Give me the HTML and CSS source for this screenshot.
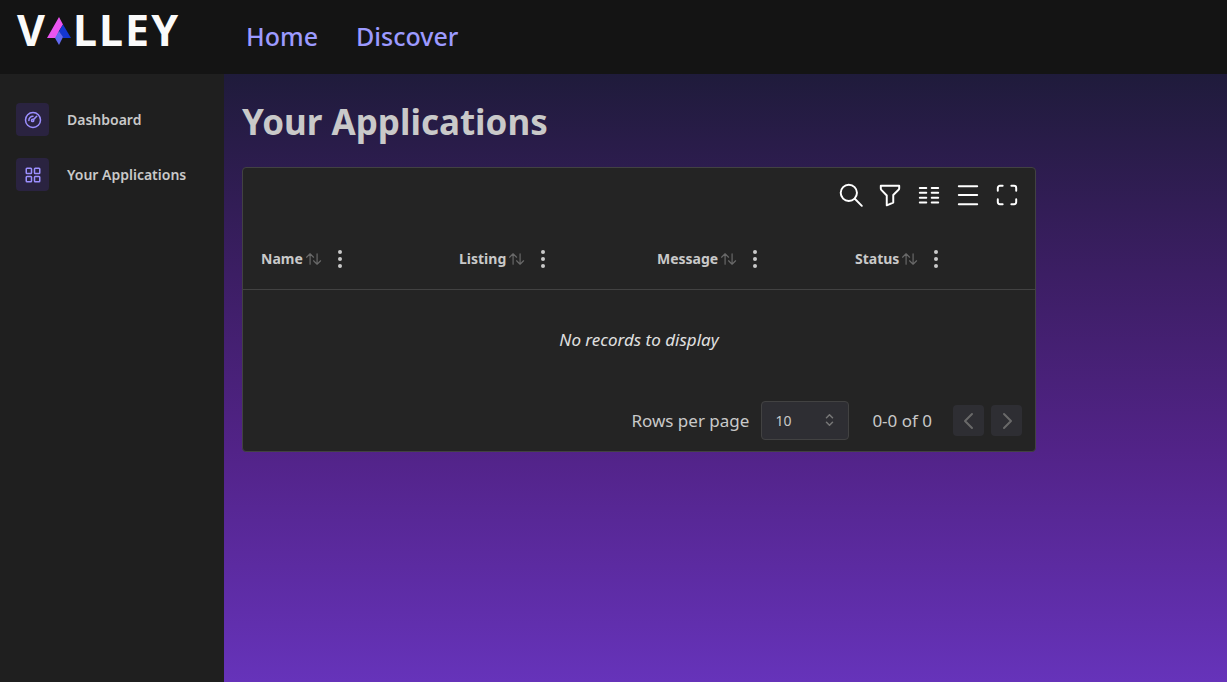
FILE: index.html
```html
<!DOCTYPE html>
<html lang="en">
<head>
<meta charset="utf-8">
<meta name="viewport" content="width=device-width, initial-scale=1">
<title>Valley</title>
<link rel="stylesheet" href="styles.css">
</head>
<body>
<header class="topbar">
  <a class="logo" href="#" aria-label="Valley">
    <span>V</span>
    <svg class="logo-mark" viewBox="0 0 24 28" aria-hidden="true">
      <path fill="#eb55f0" d="M12 0 16 7.500 12 14 9 21H0Z"/>
      <path fill="#1436d2" d="M16 7.500 24 21H16L12 14Z"/>
      <path fill="#626af2" d="M12 14 16 20 12 28 8 21Z"/>
    </svg>
    <span>L</span><span>L</span><span>E</span><span>Y</span>
  </a>
  <nav class="topnav">
    <a href="#">Home</a>
    <a href="#">Discover</a>
  </nav>
</header>
<div class="body">
  <nav class="sidebar">
    <a class="side-link" href="#">
      <span class="side-icon"><svg viewBox="0 0 24 24" class="stroke"><circle cx="12" cy="12" r="10"/><circle cx="11.500" cy="12.500" r="1.500"/><path d="M12.800 11.200 17 7M6.500 12.500A5.500 5.500 0 0 1 12 7"/></svg></span>
      Dashboard
    </a>
    <a class="side-link" href="#">
      <span class="side-icon"><svg viewBox="0 0 24 24" class="stroke"><rect x="3" y="3" width="7" height="7" rx="1"/><rect x="14" y="3" width="7" height="7" rx="1"/><rect x="3" y="14" width="7" height="7" rx="1"/><rect x="14" y="14" width="7" height="7" rx="1"/></svg></span>
      Your Applications
    </a>
  </nav>
  <main class="main">
    <h1>Your Applications</h1>
    <section class="card">
      <div class="toolbar">
        <button type="button" aria-label="Search"><svg viewBox="0 0 24 24" class="stroke"><circle cx="10" cy="10" r="7.500"/><path d="m22 22-6.500-6.500"/></svg></button>
        <button type="button" aria-label="Filter"><svg viewBox="0 0 24 24" class="stroke"><path d="M3.500 3.500h17v2.300a2 2 0 0 1-.6 1.400L15 12v7l-6 2.500v-9L4 7.200a2 2 0 0 1-.5-1.400Z"/></svg></button>
        <button type="button" aria-label="Columns"><svg viewBox="0 0 24 24" class="stroke"><path d="M3.500 5.500h6M3.500 10h6M3.500 14.500h6M3.500 19h6M14.500 5.500h6M14.500 10h6M14.500 14.500h6M14.500 19h6"/></svg></button>
        <button type="button" aria-label="Density"><svg viewBox="0 0 24 24" class="stroke"><path d="M3.500 4h17M3.500 12h17M3.500 20.500h17"/></svg></button>
        <button type="button" aria-label="Full screen"><svg viewBox="0 0 24 24" class="stroke"><path d="M3.500 8V5.500a2 2 0 0 1 2-2H8M3.500 16v2.500a2 2 0 0 0 2 2H8M16 3.500h2.500a2 2 0 0 1 2 2V8M16 20.500h2.500a2 2 0 0 0 2-2V16"/></svg></button>
      </div>
      <table class="grid">
        <thead>
          <tr>
            <th scope="col"><div class="head">Name<svg class="sort stroke" viewBox="0 0 24 24"><path d="M7 21V3M1 9l6-6 6 6M19 3v18M13 15l6 6 6-6"/></svg><button type="button" class="dots" aria-label="Name actions"><svg viewBox="0 0 4 18"><circle cx="2" cy="2" r="2"/><circle cx="2" cy="9" r="2"/><circle cx="2" cy="16" r="2"/></svg></button></div></th>
            <th scope="col"><div class="head">Listing<svg class="sort stroke" viewBox="0 0 24 24"><path d="M7 21V3M1 9l6-6 6 6M19 3v18M13 15l6 6 6-6"/></svg><button type="button" class="dots" aria-label="Listing actions"><svg viewBox="0 0 4 18"><circle cx="2" cy="2" r="2"/><circle cx="2" cy="9" r="2"/><circle cx="2" cy="16" r="2"/></svg></button></div></th>
            <th scope="col"><div class="head">Message<svg class="sort stroke" viewBox="0 0 24 24"><path d="M7 21V3M1 9l6-6 6 6M19 3v18M13 15l6 6 6-6"/></svg><button type="button" class="dots" aria-label="Message actions"><svg viewBox="0 0 4 18"><circle cx="2" cy="2" r="2"/><circle cx="2" cy="9" r="2"/><circle cx="2" cy="16" r="2"/></svg></button></div></th>
            <th scope="col"><div class="head">Status<svg class="sort stroke" viewBox="0 0 24 24"><path d="M7 21V3M1 9l6-6 6 6M19 3v18M13 15l6 6 6-6"/></svg><button type="button" class="dots" aria-label="Status actions"><svg viewBox="0 0 4 18"><circle cx="2" cy="2" r="2"/><circle cx="2" cy="9" r="2"/><circle cx="2" cy="16" r="2"/></svg></button></div></th>
          </tr>
        </thead>
        <tbody>
          <tr><td colspan="4" class="empty">No records to display</td></tr>
        </tbody>
      </table>
      <div class="pager">
        <label for="rows">Rows per page</label>
        <span class="select-wrap">
          <select id="rows"><option>5</option><option selected>10</option><option>20</option></select>
          <svg class="chev stroke" viewBox="0 0 12 16"><path d="M2 5l4-4 4 4M2 11l4 4 4-4"/></svg>
        </span>
        <span class="range">0-0 of 0</span>
        <div class="page-buttons">
          <button type="button" aria-label="Previous page" disabled><svg viewBox="0 0 24 24" class="stroke"><path d="m15 5-7 7 7 7"/></svg></button>
          <button type="button" aria-label="Next page" disabled><svg viewBox="0 0 24 24" class="stroke"><path d="m9 5 7 7-7 7"/></svg></button>
        </div>
      </div>
    </section>
  </main>
</div>
</body>
</html>
```
FILE: styles.css
```css
* { box-sizing: border-box; }
body {
  margin: 0;
  min-height: 100vh;
  display: flex;
  flex-direction: column;
  font-family: "Noto Sans", "Open Sans", sans-serif;
  color: #c9c9c9;
  background: #1f1f1f;
}
a { color: inherit; text-decoration: none; }
button { border: 0; padding: 0; background: none; color: inherit; font: inherit; }
svg { display: block; }
.stroke { fill: none; stroke: currentColor; stroke-width: 2; stroke-linecap: round; stroke-linejoin: round; }

.topbar { display: flex; align-items: center; height: 74px; padding: 0 17px; background: #141414; }
.logo { display: flex; align-items: center; gap: 2px; width: 229px; padding-bottom: 14px; font-size: 43px; line-height: 60px; font-weight: 700; color: #fafafa; }
.logo-mark { width: 24px; height: 28px; margin-top: 2px; }
.topnav { display: flex; gap: 38px; padding-bottom: 2px; font-size: 25px; font-weight: 500; color: #9c9aff; }

.body { flex: 1; display: flex; }
.sidebar { flex: none; width: 224px; padding: 29px 16px; display: flex; flex-direction: column; gap: 22px; background: #1f1f1f; }
.side-link { display: flex; align-items: center; gap: 18px; font-size: 14px; font-weight: 600; }
.side-icon { display: grid; place-items: center; width: 33px; height: 33px; border-radius: 4px; background: #2a2340; color: #9c8fff; }
.side-icon svg { width: 18px; height: 18px; }

.main { flex: 1; padding: 21px 18px; background: linear-gradient(180deg, #1f1b3b 0%, #3c1e64 33%, #522388 62%, #6633ba 100%); }
h1 { margin: 0 0 19px; font-size: 35px; line-height: 53px; font-weight: 700; }

.card { width: fit-content; border: 1px solid #424242; border-radius: 4px; background: #242424; }
.toolbar { display: flex; justify-content: flex-end; gap: 13px; padding: 14px 15px; color: #fff; }
.toolbar svg { width: 26px; height: 26px; stroke-width: 1.8; }
.grid { border-collapse: collapse; table-layout: fixed; width: 792px; }
.grid th { padding: 0 18px; height: 67px; border-bottom: 1px solid #424242; text-align: left; }
.head { display: flex; align-items: center; padding-top: 8px; font-size: 14px; line-height: 20px; font-weight: 700; }
.sort { width: 16px; height: 14px; margin-left: 2px; color: #696969; overflow: visible; }
.dots { margin-left: 17px; }
.dots svg { width: 4px; height: 18px; fill: currentColor; }
.empty { height: 101px; padding: 0; text-align: center; font-size: 17px; font-style: italic; color: #e0e0e0; }
.pager { display: flex; align-items: center; justify-content: flex-end; padding: 11px 13px; font-size: 17px; }
.select-wrap { position: relative; margin: 0 23px 0 12px; }
.select-wrap select { appearance: none; display: block; width: 88px; height: 39px; padding: 0 13px; border: 1px solid #424242; border-radius: 4px; background: #2e2e33; color: inherit; font: inherit; font-size: 14px; }
.chev { position: absolute; right: 15px; top: 13px; width: 9px; height: 12px; color: #777; }
.page-buttons { display: flex; gap: 7px; margin-left: 21px; }
.page-buttons button { display: grid; place-items: center; width: 31px; height: 31px; border-radius: 4px; background: #2e2e33; color: #696969; }
.page-buttons svg { width: 24px; height: 24px; }
```
